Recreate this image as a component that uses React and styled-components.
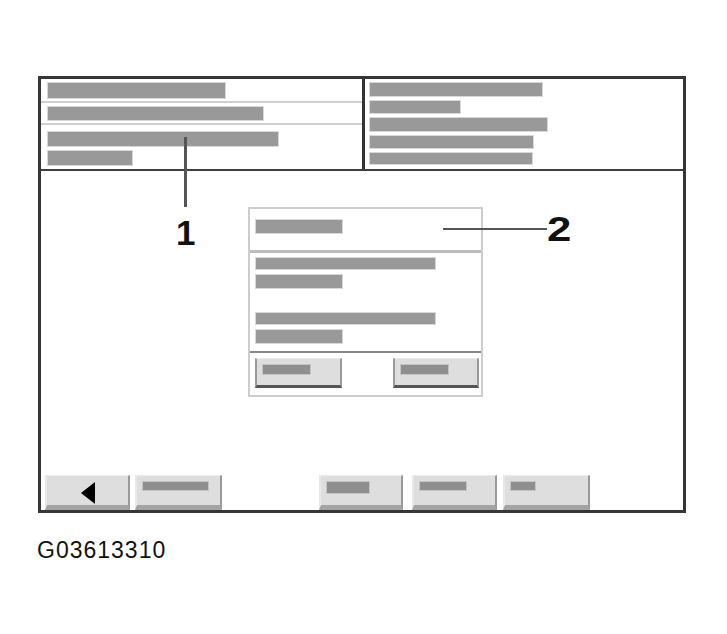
import React from "react";
import styled, { createGlobalStyle } from "styled-components";

const Global = createGlobalStyle`
  html, body {
    margin: 0;
    padding: 0;
    background: #fff;
    font-family: "Liberation Sans", Arial, sans-serif;
  }
`;

const Page = styled.div`
  width: 727px;
  height: 634px;
  padding: 76px 0 0 38px;
  box-sizing: border-box;
  position: relative;
`;

const Frame = styled.div`
  width: 648px;
  height: 437px;
  border: 3px solid #363636;
  box-sizing: border-box;
  display: flex;
  flex-direction: column;
  position: relative;
`;

const Header = styled.div`
  display: grid;
  grid-template-columns: 324px 1fr;
  height: 92px;
  border-bottom: 2px solid #3e3e3e;
  box-sizing: border-box;
`;

const LeftPanel = styled.div`
  display: flex;
  flex-direction: column;
  border-right: 3px solid #333;
`;

const HeadRow = styled.div`
  display: flex;
  flex-direction: column;
  gap: 5px;
  padding: ${(p) => p.$pad || "4px 0 3px 7px"};
  border-bottom: ${(p) => (p.$last ? "none" : "2px solid #cfcfcf")};
  flex: ${(p) => (p.$last ? 1 : "none")};
`;

const RightPanel = styled.div`
  display: flex;
  flex-direction: column;
  gap: 5px;
  padding: 4px 0 0 5px;
`;

const Bar = styled.div`
  width: ${(p) => p.$w}px;
  height: ${(p) => p.$h || 13}px;
  background: #999;
  box-shadow: 0 0 0 1px #d8d8d8;
`;

const Main = styled.div`
  flex: 1;
  display: flex;
  flex-direction: column;
  padding-top: 36px;
`;

const Dialog = styled.div`
  margin-left: 207px;
  width: 235px;
  height: 190px;
  border: 2px solid #cdcdcd;
  box-sizing: border-box;
  display: flex;
  flex-direction: column;
`;

const DialogTitle = styled.div`
  height: 44px;
  padding: 11px 0 0 6px;
  box-sizing: border-box;
  border-bottom: 3px solid #bdbdbd;
`;

const DialogBody = styled.div`
  display: flex;
  flex-direction: column;
  gap: 6px;
  padding: 5px 0 0 6px;
  height: 100px;
  box-sizing: border-box;
  border-bottom: 2px solid #888;
`;

const Spacer = styled.div`
  height: ${(p) => p.$h}px;
`;

const DialogButtons = styled.div`
  display: flex;
  justify-content: space-between;
  padding: 5px 2px 0 5px;
`;

const Button = styled.div`
  width: ${(p) => p.$w}px;
  height: ${(p) => p.$h || 30}px;
  box-sizing: border-box;
  background: #dedede;
  border-top: 1px solid #ececec;
  border-left: 2px solid ${(p) => (p.$dark ? "#9a9a9a" : "#e9e9e9")};
  border-right: 2px solid #999;
  border-bottom: ${(p) => (p.$tool ? "5px solid #a4a4a4" : "3px solid #555")};
  display: flex;
  align-items: flex-start;
  justify-content: ${(p) => (p.$center ? "center" : "flex-start")};
  padding: ${(p) => (p.$center ? "5px 0 0 0" : "6px 0 0 6px")};
`;

const ButtonBar = styled.div`
  width: ${(p) => p.$w}px;
  height: ${(p) => p.$h || 9}px;
  background: #8f8f8f;
  box-shadow: 0 0 0 1px #c4c4c4;
`;

const Toolbar = styled.div`
  margin-top: auto;
  display: flex;
  align-items: flex-end;
  padding-left: 4px;
`;

const ToolGap = styled.div`
  width: ${(p) => p.$w}px;
`;

const Callout = styled.div`
  position: absolute;
  font-family: "Liberation Sans", Arial, sans-serif;
  font-weight: bold;
  font-size: 35px;
  line-height: 1;
  color: #111;
  transform-origin: left top;
  transform: scaleX(${(p) => p.$sx || 1});
`;

const Leader = styled.div`
  position: absolute;
  background: #555;
`;

const Caption = styled.div`
  margin-top: 24px;
  margin-left: -1px;
  font-size: 23px;
  letter-spacing: 1px;
  color: #111;
  font-family: "Liberation Sans", Arial, sans-serif;
`;

const BackArrow = () => (
  <svg width="18" height="24" viewBox="0 0 18 24">
    <polygon points="2,12 16,1 16,23" fill="#000" />
  </svg>
);

export default function App() {
  return (
    <Page>
      <Global />
      <Frame>
        <Header>
          <LeftPanel>
            <HeadRow>
              <Bar $w={177} $h={15} />
            </HeadRow>
            <HeadRow>
              <Bar $w={215} $h={13} />
            </HeadRow>
            <HeadRow $last $pad="7px 0 0 7px">
              <Bar $w={230} $h={14} />
              <Bar $w={84} $h={14} />
            </HeadRow>
          </LeftPanel>
          <RightPanel>
            <Bar $w={172} $h={13} />
            <Bar $w={90} $h={12} />
            <Bar $w={177} $h={13} />
            <Bar $w={163} $h={12} />
            <Bar $w={162} $h={11} />
          </RightPanel>
        </Header>
        <Main>
          <Dialog>
            <DialogTitle>
              <Bar $w={86} $h={13} />
            </DialogTitle>
            <DialogBody>
              <Bar $w={179} $h={11} />
              <Bar $w={86} $h={13} />
              <Spacer $h={13} />
              <Bar $w={179} $h={11} />
              <Bar $w={86} $h={13} />
            </DialogBody>
            <DialogButtons>
              <Button $w={87} $dark>
                <ButtonBar $w={47} />
              </Button>
              <Button $w={86} $dark>
                <ButtonBar $w={47} />
              </Button>
            </DialogButtons>
          </Dialog>
          <Toolbar>
            <Button $w={85} $h={35} $tool $center>
              <BackArrow />
            </Button>
            <ToolGap $w={5} />
            <Button $w={87} $h={35} $tool>
              <ButtonBar $w={65} $h={8} />
            </Button>
            <ToolGap $w={97} />
            <Button $w={84} $h={35} $tool>
              <ButtonBar $w={42} $h={11} />
            </Button>
            <ToolGap $w={9} />
            <Button $w={85} $h={35} $tool>
              <ButtonBar $w={46} $h={8} />
            </Button>
            <ToolGap $w={6} />
            <Button $w={87} $h={35} $tool>
              <ButtonBar $w={24} $h={8} />
            </Button>
          </Toolbar>
        </Main>
        <Leader style={{ left: 143, top: 58, width: 3, height: 70 }} />
        <Callout style={{ left: 135, top: 136 }}>1</Callout>
        <Leader style={{ left: 402, top: 149, width: 104, height: 2 }} />
        <Callout $sx={1.25} style={{ left: 506, top: 132 }}>2</Callout>
      </Frame>
      <Caption>G03613310</Caption>
    </Page>
  );
}
